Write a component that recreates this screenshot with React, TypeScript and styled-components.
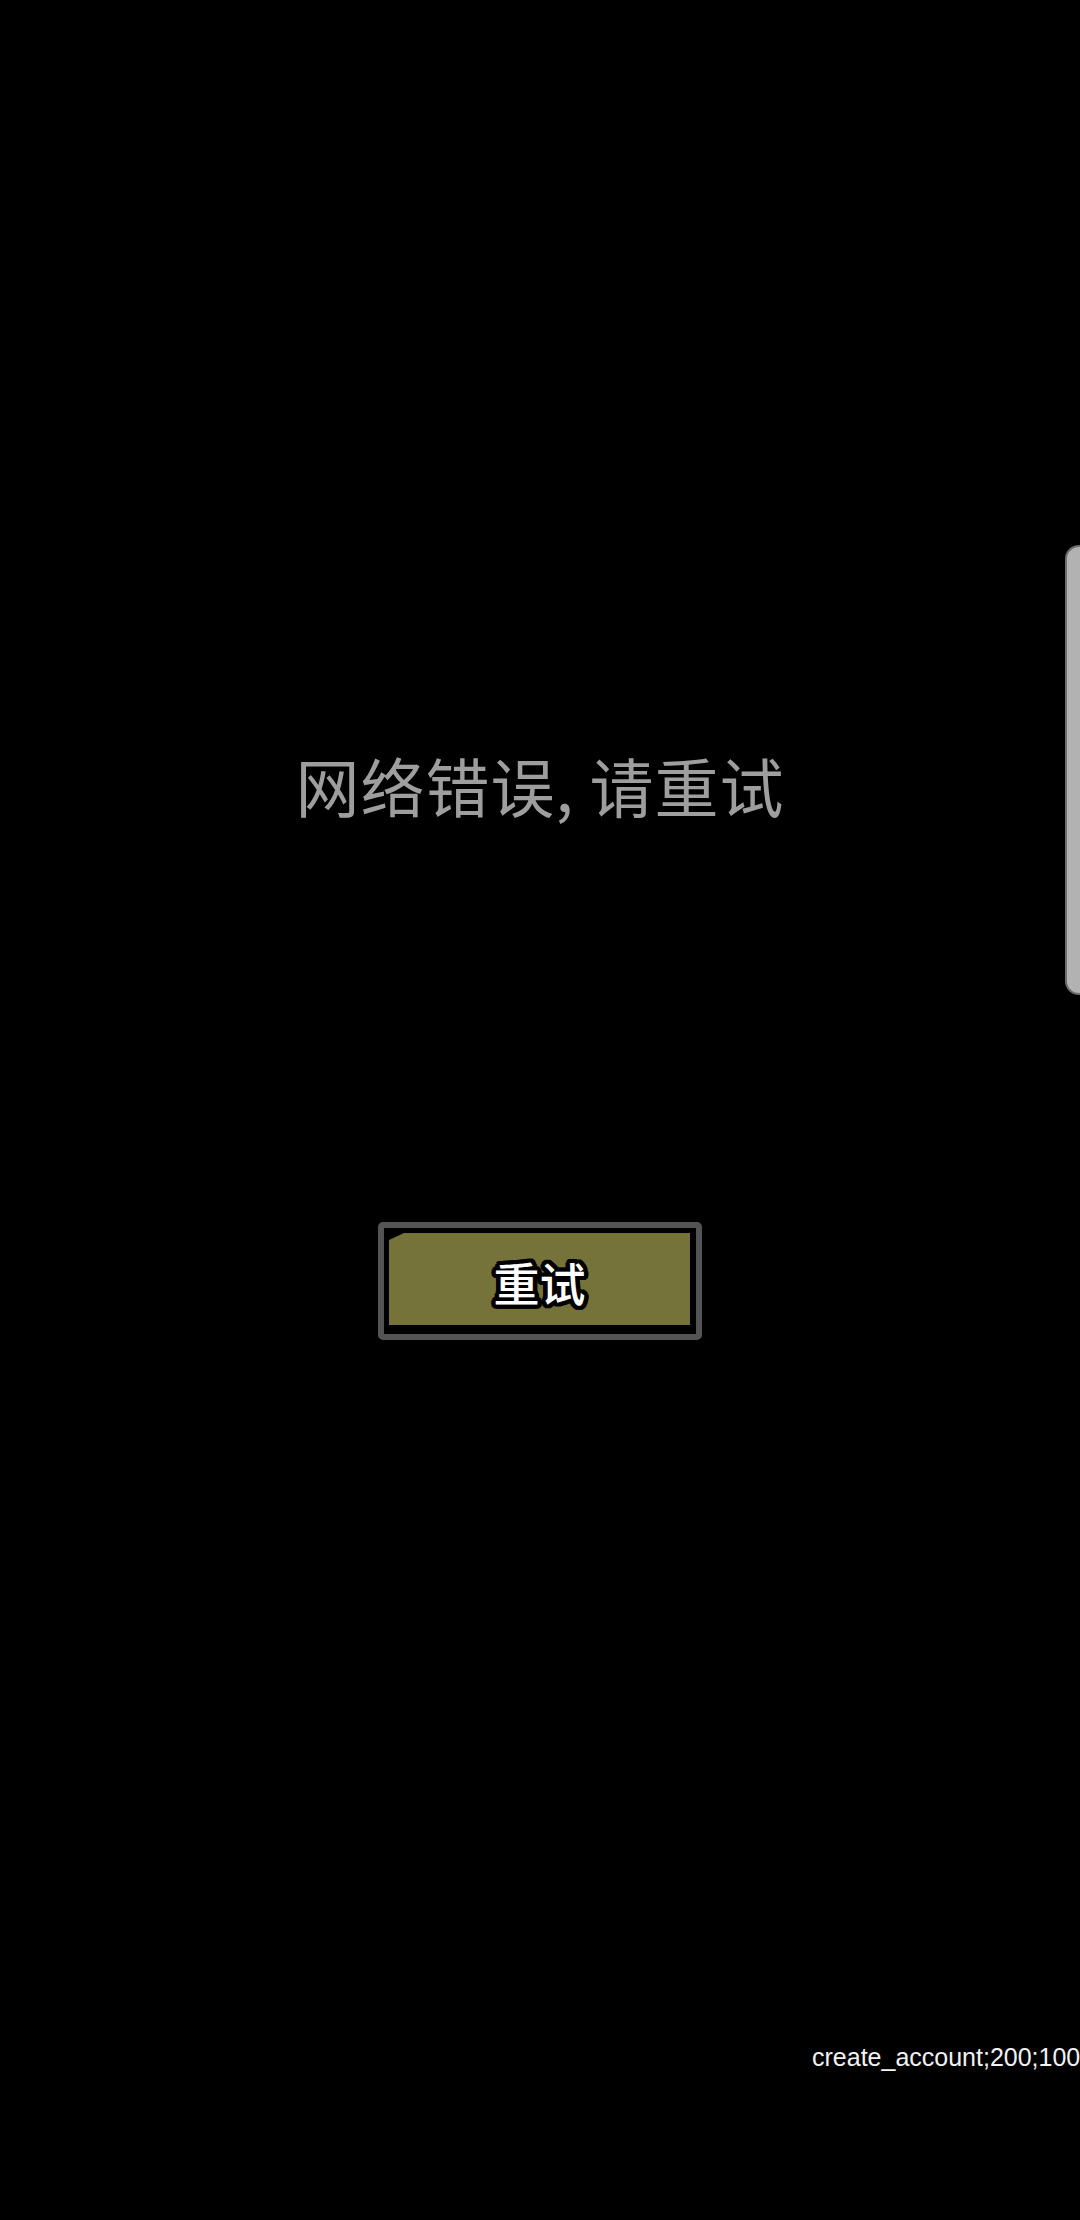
import styled, { createGlobalStyle } from 'styled-components'

const GlobalStyle = createGlobalStyle`
  html, body {
    margin: 0;
    padding: 0;
    background: #000;
  }
  #root {
    width: 1080px;
  }
`

const Screen = styled.div`
  position: relative;
  width: 1080px;
  height: 2220px;
  overflow: hidden;
  background: #000;
  display: flex;
  flex-direction: column;
  align-items: center;
`

const Message = styled.div`
  margin-top: 752px;
  font-family: 'Noto Sans CJK SC', 'Noto Sans', sans-serif;
  font-size: 64px;
  line-height: 64px;
  letter-spacing: 1px;
  color: #9e9e9e;
  white-space: nowrap;
`

const RetryButton = styled.button`
  margin-top: 406px;
  width: 324px;
  height: 118px;
  box-sizing: border-box;
  padding: 5px 6px 9px 5px;
  border: 6px solid #545454;
  border-radius: 5px;
  background: #000;
  cursor: pointer;
  display: flex;
`

const Face = styled.div`
  flex: 1;
  background: #75733a;
  clip-path: polygon(15px 0, 100% 0, 100% 100%, 0 100%, 0 7px);
  display: flex;
  align-items: center;
  justify-content: center;
  padding-top: 4px;
`

// thick black outline drawn as a ring of shadows
const outline = (r: number) => {
  const out: string[] = []
  for (let a = 0; a < 360; a += 20) {
    const rad = (a * Math.PI) / 180
    out.push(`${(Math.cos(rad) * r).toFixed(1)}px ${(Math.sin(rad) * r).toFixed(1)}px 0 #000`)
  }
  return out.join(', ')
}

const FaceLabel = styled.span`
  font-family: 'Noto Sans CJK SC', 'Noto Sans', sans-serif;
  font-weight: 500;
  font-size: 46px;
  line-height: 1;
  color: #fff;
  text-shadow: ${outline(4.5)};
`

const Footer = styled.div`
  align-self: flex-start;
  margin-top: auto;
  margin-bottom: 148px;
  margin-left: 812px;
  font-family: 'Liberation Sans', Arial, sans-serif;
  font-size: 25px;
  line-height: 30px;
  color: #f2f2f2;
  white-space: nowrap;
`

const EdgeHandle = styled.div`
  position: absolute;
  top: 545px;
  right: 0;
  width: 15px;
  height: 450px;
  box-sizing: border-box;
  background: #b2b2b2;
  border: 2px solid #6e6e6e;
  border-right: none;
  border-radius: 14px 0 0 14px;
`

export default function App() {
  return (
    <>
      <GlobalStyle />
      <Screen>
        <Message>网络错误, 请重试</Message>
        <RetryButton type="button">
          <Face>
            <FaceLabel>重试</FaceLabel>
          </Face>
        </RetryButton>
        <Footer>create_account;200;1003</Footer>
        <EdgeHandle />
      </Screen>
    </>
  )
}
